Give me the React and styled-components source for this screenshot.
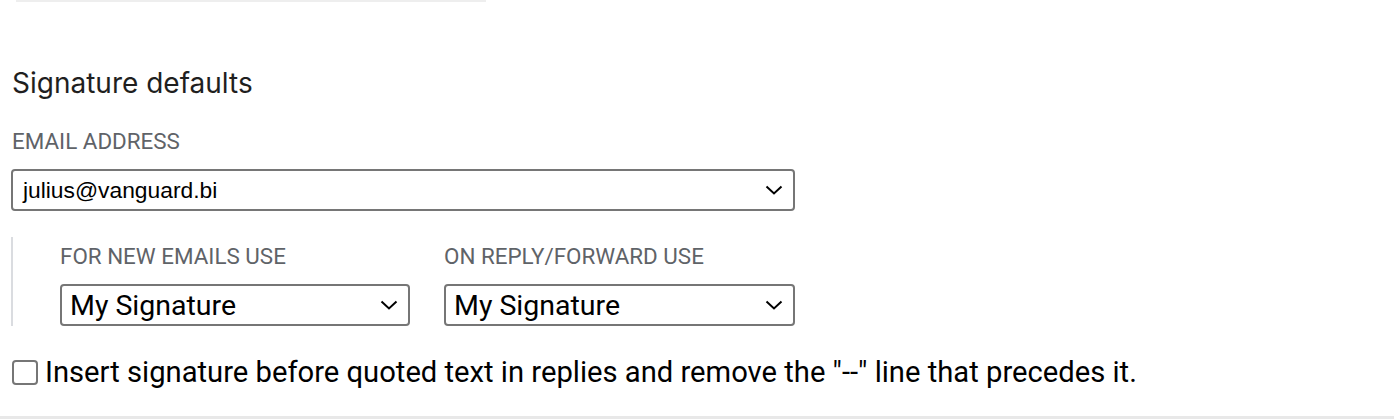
import React from "react";
import styled, { createGlobalStyle } from "styled-components";

const Global = createGlobalStyle`
  html, body { margin: 0; padding: 0; background: #fff; }
  body { font-family: Roboto, "Liberation Sans", Arial, sans-serif; color: #202124; }
`;

const Page = styled.div`
  width: 1394px;
  height: 419px;
  display: flex;
  flex-direction: column;
  overflow: hidden;
`;

const TopRule = styled.div`
  margin-left: 16px;
  width: 470px;
  height: 2px;
  background: #eeeeee;
  flex: none;
`;

const Section = styled.section`
  flex: 1;
  padding: 0 0 0 11px;
  display: flex;
  flex-direction: column;
`;

const Heading = styled.h2`
  margin: 60px 0 0 1px;
  font-family: Inter, Roboto, sans-serif;
  font-weight: 400;
  font-size: 28px;
  line-height: 42px;
  color: #1f1f1f;
`;

const Label = styled.div`
  font-family: Roboto, sans-serif;
  font-size: 22.4px;
  line-height: 26px;
  text-transform: uppercase;
  color: #5f6368;
  margin: ${(p) => p.$mt || 0}px 0 0 ${(p) => p.$ml || 0}px;
`;

const SelectBox = styled.div`
  box-sizing: border-box;
  width: ${(p) => p.$w}px;
  height: 42px;
  border: 2px solid #767676;
  border-radius: 4px;
  display: flex;
  align-items: center;
  justify-content: space-between;
  padding: 0 10px 0 ${(p) => p.$pl || 8}px;
  margin-top: ${(p) => p.$mt || 0}px;
  background: #fff;
  color: #000;
  font-family: ${(p) => (p.$arial ? '"Liberation Sans", Arial, sans-serif' : "Roboto, sans-serif")};
  font-size: ${(p) => p.$fs}px;
  white-space: nowrap;
`;

const Chevron = () => (
  <svg width="18" height="10" viewBox="0 0 18 10" fill="none">
    <path d="M1.5 1.5 L9 8.5 L16.5 1.5" stroke="#000" strokeWidth="2" />
  </svg>
);

const Indent = styled.div`
  margin-top: 26px;
  border-left: 2px solid #dadce0;
  padding-left: 47px;
  display: flex;
  gap: 34px;
  height: 89px;
  box-sizing: border-box;
`;

const Column = styled.div`
  display: flex;
  flex-direction: column;
`;

const CheckRow = styled.label`
  margin-top: 29px;
  display: flex;
  align-items: center;
  gap: 7px;
  font-family: Roboto, sans-serif;
  font-size: 29.2px;
  line-height: 34px;
  color: #000;
`;

const Box = styled.span`
  box-sizing: border-box;
  width: 26px;
  height: 25px;
  border: 2px solid #767676;
  border-radius: 4px;
  margin-left: 1px;
  flex: none;
`;

const BottomRule = styled.div`
  height: 3px;
  background: #e8e8e8;
  flex: none;
`;

export default function App() {
  return (
    <>
      <Global />
      <Page>
        <TopRule />
        <Section>
          <Heading>Signature defaults</Heading>
          <Label $mt={24} $ml={1}>Email address</Label>
          <SelectBox $w={784} $mt={15} $fs={22.8} $arial $pl={10}>
            <span>julius@vanguard.bi</span>
            <Chevron />
          </SelectBox>
          <Indent>
            <Column>
              <Label $mt={6}>For new emails use</Label>
              <SelectBox $w={350} $mt={15} $fs={28.5}>
                <span>My Signature</span>
                <Chevron />
              </SelectBox>
            </Column>
            <Column>
              <Label $mt={6}>On reply/forward use</Label>
              <SelectBox $w={351} $mt={15} $fs={28.5}>
                <span>My Signature</span>
                <Chevron />
              </SelectBox>
            </Column>
          </Indent>
          <CheckRow>
            <Box />
            <span>Insert signature before quoted text in replies and remove the "--" line that precedes it.</span>
          </CheckRow>
        </Section>
        <BottomRule />
      </Page>
    </>
  );
}
